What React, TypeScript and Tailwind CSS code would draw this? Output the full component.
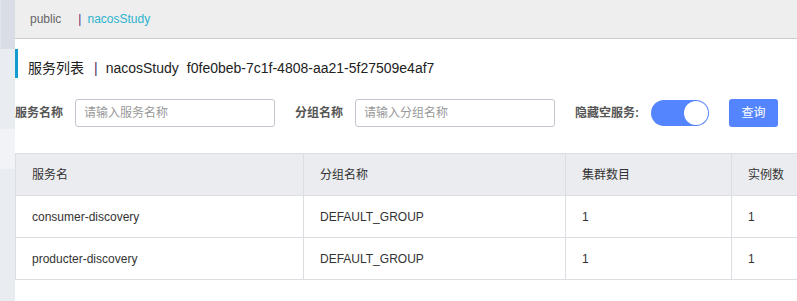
import React from "react";

const font = { fontFamily: '"Liberation Sans", Arial, "Noto Sans CJK SC", sans-serif' };

const rows = [
  { name: "consumer-discovery", group: "DEFAULT_GROUP", clusters: "1", instances: "1" },
  { name: "producter-discovery", group: "DEFAULT_GROUP", clusters: "1", instances: "1" },
];

function Cell({ w, children, header }: { w: string; children?: React.ReactNode; header?: boolean }) {
  return (
    <div
      className={`${w} shrink-0 h-[42px] border-r border-b border-[#dcdee3] flex items-center pl-[16px] text-[12px] text-[#333333] ${
        header ? "bg-[#ebecf0]" : "bg-white"
      }`}
    >
      {children}
    </div>
  );
}

export default function App() {
  return (
    <div className="w-[797px] h-[301px] overflow-hidden flex bg-white" style={font}>
      <div className="w-[15px] shrink-0 flex flex-col">
        <div className="h-[49px] bg-[#d9dee6] border-l border-[#e3e7ec]" />
        <div className="h-[80px] bg-[#e9ecf1]" />
        <div className="h-[40px] bg-[#f1f3f6]" />
        <div className="flex-1 bg-[#e9ecf1]" />
      </div>
      <div className="flex-1 min-w-0 flex flex-col overflow-hidden">
        <div className="h-[39px] shrink-0 bg-[#eeeeee] border-b border-[#cccccc] flex items-center pl-[15px] text-[12px]">
          <span className="text-[#666666]">public</span>
          <span className="ml-[17px] text-[#5e2a6e]">|</span>
          <span className="ml-[6px] text-[#2bb3cf]">nacosStudy</span>
        </div>
        <div className="mt-[10px] h-[29px] border-l-[3px] border-[#139bce] flex items-end pl-[10px] text-[14px] leading-[20px] text-[#222222] whitespace-nowrap">
          <span>服务列表</span>
          <span className="ml-[10px] mr-[8px] text-[#4a2a5a]">|</span>
          <span>nacosStudy</span>
          <span className="ml-[8px]">f0fe0beb-7c1f-4808-aa21-5f27509e4af7</span>
        </div>
        <div className="mt-[21px] h-[28px] flex items-center text-[12px] whitespace-nowrap">
          <span className="font-bold text-[#555555] w-[60px]">服务名称</span>
          <div className="w-[200px] h-[28px] border border-[#c4c6cf] rounded-[3px] flex items-center pl-[8px] text-[#999999]">
            请输入服务名称
          </div>
          <span className="ml-[20px] font-bold text-[#555555] w-[60px]">分组名称</span>
          <div className="w-[200px] h-[28px] border border-[#c4c6cf] rounded-[3px] flex items-center pl-[8px] text-[#999999]">
            请输入分组名称
          </div>
          <span className="ml-[20px] font-bold text-[#555555] w-[76px]">隐藏空服务:</span>
          <div className="w-[58px] h-[26px] rounded-full bg-[#5584ff] flex items-center justify-end pr-[1px]">
            <div className="w-[24px] h-[24px] rounded-full bg-white" />
          </div>
          <div className="ml-[20px] w-[49px] h-[28px] rounded-[3px] bg-[#5584ff] text-white flex items-center justify-center">
            查询
          </div>
        </div>
        <div className="mt-[26px] w-[1000px] border-t border-l border-[#dcdee3] flex flex-col">
          <div className="flex">
            <Cell w="w-[288px]" header>服务名</Cell>
            <Cell w="w-[262px]" header>分组名称</Cell>
            <Cell w="w-[166px]" header>集群数目</Cell>
            <Cell w="w-[200px]" header>实例数</Cell>
          </div>
          {rows.map((r) => (
            <div className="flex" key={r.name}>
              <Cell w="w-[288px]">{r.name}</Cell>
              <Cell w="w-[262px]">{r.group}</Cell>
              <Cell w="w-[166px]">{r.clusters}</Cell>
              <Cell w="w-[200px]">{r.instances}</Cell>
            </div>
          ))}
        </div>
      </div>
    </div>
  );
}
